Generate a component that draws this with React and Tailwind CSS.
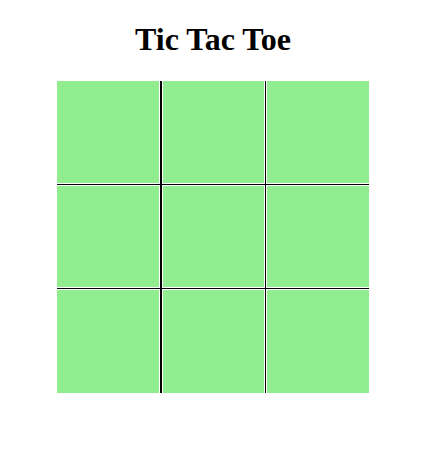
export default function App() {
  const cells = [
    "border-r border-b mr-px",
    "border-r border-l border-b",
    "border-l border-b",
    "border-r border-t border-b mr-px",
    "border",
    "border-l border-t border-b",
    "border-r border-t mr-px",
    "border-r border-l border-t",
    "border-l border-t",
  ];
  return (
    <div className="w-[426px] h-[463px] bg-white flex flex-col items-center" style={{ fontFamily: '"Liberation Serif", "Times New Roman", serif' }}>
      <h1 className="mt-[21px] h-[37px] leading-[37px] text-[32px] font-bold text-black">Tic Tac Toe</h1>
      <div className="mt-[23px] grid grid-cols-[104px_103px_103px] grid-rows-[103px_103px_104px] gap-px bg-black w-[312px] h-[312px]">
        {cells.map((c, i) => (
          <div key={i} className={`bg-[#90ee90] border-white ${c}`} />
        ))}
      </div>
    </div>
  );
}
